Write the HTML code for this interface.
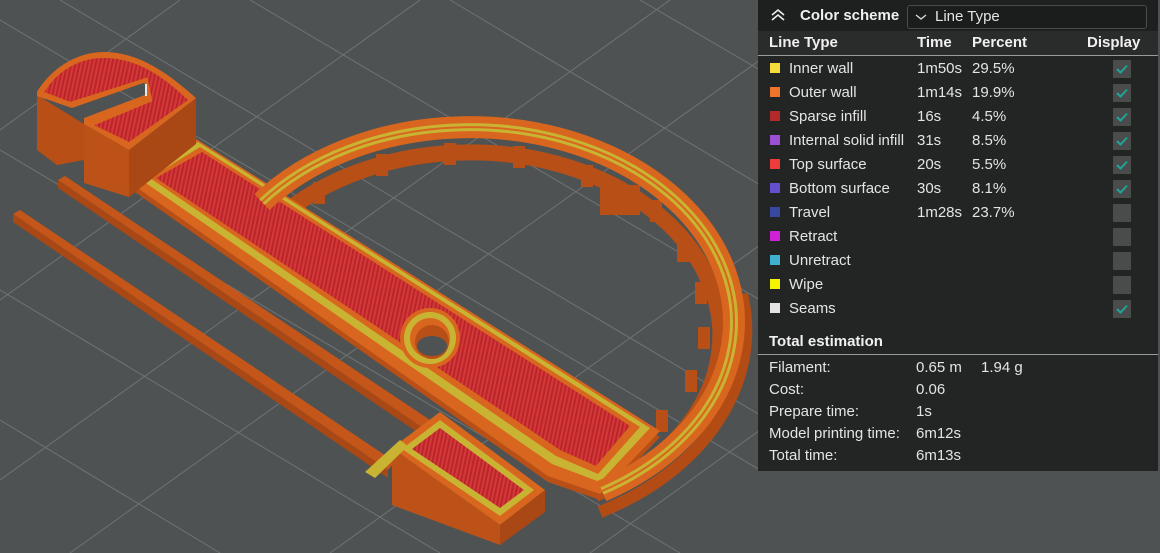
<!DOCTYPE html>
<html><head><meta charset="utf-8"><style>
html,body{margin:0;padding:0;width:1160px;height:553px;overflow:hidden;background:#4f5253;font-family:"Liberation Sans",sans-serif;}
#v{position:absolute;left:0;top:0}
#p{position:absolute;left:758px;top:0;width:400px;height:471px;background:rgba(34,35,35,0.97);color:#e4e4e4;font-size:15px;}
.hd{position:absolute;left:0;top:0;width:400px;height:31px;background:#1e1f1f}
.t{position:absolute;white-space:nowrap}
.b{font-weight:bold;color:#f0f0f0}
.sq{position:absolute;left:12px;width:10px;height:10px}
.cb{position:absolute;left:355px;width:18px;height:18px;background:#4a4b4b}
.cb svg{position:absolute;left:3px;top:4px}
</style></head><body>
<svg id="v" width="760" height="553" viewBox="0 0 760 553">
<defs>
<pattern id="st" width="4" height="4" patternUnits="userSpaceOnUse" patternTransform="rotate(12)">
<rect width="4" height="4" fill="#b8262a"/><rect width="2" height="4" fill="#d6383a"/></pattern>
</defs>
<g stroke="#707374" stroke-width="1" fill="none">
<line x1="0" y1="20" x2="760" y2="470"/><line x1="0" y1="150" x2="680" y2="553"/>
<line x1="0" y1="290" x2="440" y2="553"/><line x1="0" y1="420" x2="220" y2="553"/>
<line x1="60" y1="0" x2="760" y2="415"/><line x1="250" y1="0" x2="760" y2="300"/>
<line x1="450" y1="0" x2="760" y2="185"/><line x1="640" y1="0" x2="760" y2="70"/>
<line x1="0" y1="300" x2="420" y2="0"/><line x1="0" y1="480" x2="670" y2="0"/>
<line x1="70" y1="553" x2="760" y2="60"/><line x1="330" y1="553" x2="760" y2="245"/>
<line x1="590" y1="553" x2="760" y2="430"/><line x1="0" y1="130" x2="180" y2="0"/>
</g>
<polygon points="13,214 20,210 395,462 388,470" fill="#c4561a"/>
<polygon points="13,214 13,222 388,478 388,470" fill="#a94814"/>
<polygon points="58,180 65,176 430,420 423,428" fill="#c4561a"/>
<polygon points="58,180 58,188 423,436 423,428" fill="#a94814"/>
<path d="M742,294 A276,206 0 0 1 600,512" fill="none" stroke="#b24c14" stroke-width="12"/>
<path d="M273,223 A250,183 0 1 1 595,494" fill="none" stroke="#b84f16" stroke-width="16"/>
<g fill="#b84f16">
<rect x="313" y="182" width="12" height="22"/><rect x="376" y="154" width="12" height="22"/><rect x="444" y="143" width="12" height="22"/>
<rect x="513" y="146" width="12" height="22"/><rect x="581" y="165" width="12" height="22"/>
<rect x="600" y="185" width="40" height="30"/><rect x="650" y="200" width="12" height="22"/>
<rect x="677" y="240" width="12" height="22"/><rect x="695" y="282" width="12" height="22"/><rect x="698" y="327" width="12" height="22"/>
<rect x="685" y="370" width="12" height="22"/><rect x="656" y="410" width="12" height="22"/><rect x="615" y="442" width="12" height="22"/>
</g>
<polygon points="132,190 196,145 660,437 600,500 548,482" fill="#b84f16"/>
<polygon points="132,190 196,145 660,437 600,500 548,482" fill="#d8661e" transform="translate(0,-6)"/>
<polygon points="140,185 198,148 650,434 600,488 552,470" fill="#c8b432" transform="translate(0,-6)"/>
<polygon points="150,184 200,153 640,433 598,480 556,462" fill="#d8661e" transform="translate(0,-6)"/>
<polygon points="156,184 202,158 630,432 596,472 560,456" fill="url(#st)" transform="translate(0,-6)"/>
<path d="M262,202 A264,195 0 1 1 602,491" fill="none" stroke="#d8661e" stroke-width="22"/>
<path d="M262,202 A264,195 0 1 1 602,491" fill="none" stroke="#c8b432" stroke-width="8"/>
<path d="M262,202 A264,195 0 1 1 602,491" fill="none" stroke="#d8661e" stroke-width="2"/>
<circle cx="430" cy="338" r="30" fill="#d8661e"/><circle cx="430" cy="338" r="26" fill="#c8b432"/>
<circle cx="430" cy="338" r="20" fill="#d8661e"/><circle cx="432" cy="342" r="17" fill="#b84f16"/>
<ellipse cx="432" cy="346" rx="15" ry="10" fill="#4f5253"/>
<polygon points="37,95 37,150 57,165 84,160 84,124" fill="#b84f16"/>
<polygon points="84,124 84,183 129,197 129,150" fill="#bd5218"/>
<polygon points="129,150 129,197 196,144 196,98" fill="#a94814"/>
<path d="M37,92 C50,70 75,52 104,52 C140,52 170,75 196,98 L129,150 L84,124 L84,118 L145,95 L146,82 L72,108 L37,96 Z" fill="#d8661e"/>
<path d="M44,93 C56,72 78,58 104,58 C138,58 165,78 188,100 L129,142 L92,124 L150,100 L146,80 L70,104 Z" fill="url(#st)"/>
<path d="M44,94 L70,104 L146,80 L150,100 L92,124 L86,120" fill="none" stroke="#d8661e" stroke-width="4"/>
<line x1="146" y1="84" x2="146" y2="96" stroke="#e8e8e8" stroke-width="2"/>
<polygon points="392,448 440,412 545,490 500,525" fill="#d8661e"/>
<polygon points="402,449 440,420 534,490 500,516" fill="#c8b432"/>
<polygon points="412,449 440,428 524,490 500,508" fill="url(#st)"/>
<polygon points="392,448 392,505 500,545 500,525" fill="#bd5218"/>
<polygon points="500,525 545,490 545,512 500,545" fill="#a94814"/>
<polygon points="365,472 400,440 408,446 375,478" fill="#c8b432"/>
</svg>
<div id="p">
<div class="hd"></div>
<svg class="t" style="left:12px;top:8px" width="16" height="14"><path d="M2,7 L8,2 L14,7 M2,12 L8,7 L14,12" stroke="#eee" stroke-width="1.6" fill="none"/></svg>
<div class="t b" style="left:42px;top:7px">Color scheme</div>
<div class="t" style="left:149px;top:5px;width:238px;height:22px;border:1px solid #4a4b4b;border-radius:3px;background:#1b1c1c"></div>
<svg class="t" style="left:157px;top:13px" width="12" height="8"><path d="M1,2 L6,6 L11,2" stroke="#ddd" stroke-width="1.3" fill="none"/></svg>
<div class="t" style="left:177px;top:8px">Line Type</div>
<div class="t" style="left:0;top:31px;width:400px;height:24px;background:#2a2b2b"></div>
<div class="t b" style="left:11px;top:34px">Line Type</div>
<div class="t b" style="left:159px;top:34px">Time</div>
<div class="t b" style="left:214px;top:34px">Percent</div>
<div class="t b" style="left:329px;top:34px">Display</div>
<div class="t" style="left:0;top:55px;width:400px;height:1px;background:#9a9a9a"></div>

<div class="sq" style="top:63px;background:#f5dc3c"></div><div class="t" style="left:31px;top:60px">Inner wall</div><div class="t" style="left:159px;top:60px">1m50s</div><div class="t" style="left:214px;top:60px">29.5%</div>
<div class="sq" style="top:87px;background:#f0742c"></div><div class="t" style="left:31px;top:84px">Outer wall</div><div class="t" style="left:159px;top:84px">1m14s</div><div class="t" style="left:214px;top:84px">19.9%</div>
<div class="sq" style="top:111px;background:#b42a28"></div><div class="t" style="left:31px;top:108px">Sparse infill</div><div class="t" style="left:159px;top:108px">16s</div><div class="t" style="left:214px;top:108px">4.5%</div>
<div class="sq" style="top:135px;background:#9a50d0"></div><div class="t" style="left:31px;top:132px">Internal solid infill</div><div class="t" style="left:159px;top:132px">31s</div><div class="t" style="left:214px;top:132px">8.5%</div>
<div class="sq" style="top:159px;background:#ee3c3c"></div><div class="t" style="left:31px;top:156px">Top surface</div><div class="t" style="left:159px;top:156px">20s</div><div class="t" style="left:214px;top:156px">5.5%</div>
<div class="sq" style="top:183px;background:#6450cc"></div><div class="t" style="left:31px;top:180px">Bottom surface</div><div class="t" style="left:159px;top:180px">30s</div><div class="t" style="left:214px;top:180px">8.1%</div>
<div class="sq" style="top:207px;background:#3848a0"></div><div class="t" style="left:31px;top:204px">Travel</div><div class="t" style="left:159px;top:204px">1m28s</div><div class="t" style="left:214px;top:204px">23.7%</div>
<div class="sq" style="top:231px;background:#d020d8"></div><div class="t" style="left:31px;top:228px">Retract</div>
<div class="sq" style="top:255px;background:#40b0d0"></div><div class="t" style="left:31px;top:252px">Unretract</div>
<div class="sq" style="top:279px;background:#f4f400"></div><div class="t" style="left:31px;top:276px">Wipe</div>
<div class="sq" style="top:303px;background:#e4e4e4"></div><div class="t" style="left:31px;top:300px">Seams</div>

<div class="cb" style="top:60px"><svg width="12" height="10"><path d="M1,5 L4.5,8.5 L11,1.5" stroke="#1aa596" stroke-width="2" fill="none"/></svg></div>
<div class="cb" style="top:84px"><svg width="12" height="10"><path d="M1,5 L4.5,8.5 L11,1.5" stroke="#1aa596" stroke-width="2" fill="none"/></svg></div>
<div class="cb" style="top:108px"><svg width="12" height="10"><path d="M1,5 L4.5,8.5 L11,1.5" stroke="#1aa596" stroke-width="2" fill="none"/></svg></div>
<div class="cb" style="top:132px"><svg width="12" height="10"><path d="M1,5 L4.5,8.5 L11,1.5" stroke="#1aa596" stroke-width="2" fill="none"/></svg></div>
<div class="cb" style="top:156px"><svg width="12" height="10"><path d="M1,5 L4.5,8.5 L11,1.5" stroke="#1aa596" stroke-width="2" fill="none"/></svg></div>
<div class="cb" style="top:180px"><svg width="12" height="10"><path d="M1,5 L4.5,8.5 L11,1.5" stroke="#1aa596" stroke-width="2" fill="none"/></svg></div>
<div class="cb" style="top:204px"></div>
<div class="cb" style="top:228px"></div>
<div class="cb" style="top:252px"></div>
<div class="cb" style="top:276px"></div>
<div class="cb" style="top:300px"><svg width="12" height="10"><path d="M1,5 L4.5,8.5 L11,1.5" stroke="#1aa596" stroke-width="2" fill="none"/></svg></div>

<div class="t b" style="left:11px;top:333px">Total estimation</div>
<div class="t" style="left:0;top:354px;width:400px;height:1px;background:#9a9a9a"></div>
<div class="t" style="left:11px;top:359px">Filament:</div><div class="t" style="left:158px;top:359px">0.65 m</div><div class="t" style="left:223px;top:359px">1.94 g</div>
<div class="t" style="left:11px;top:381px">Cost:</div><div class="t" style="left:158px;top:381px">0.06</div>
<div class="t" style="left:11px;top:403px">Prepare time:</div><div class="t" style="left:158px;top:403px">1s</div>
<div class="t" style="left:11px;top:425px">Model printing time:</div><div class="t" style="left:158px;top:425px">6m12s</div>
<div class="t" style="left:11px;top:447px">Total time:</div><div class="t" style="left:158px;top:447px">6m13s</div>
</div>
</body></html>
